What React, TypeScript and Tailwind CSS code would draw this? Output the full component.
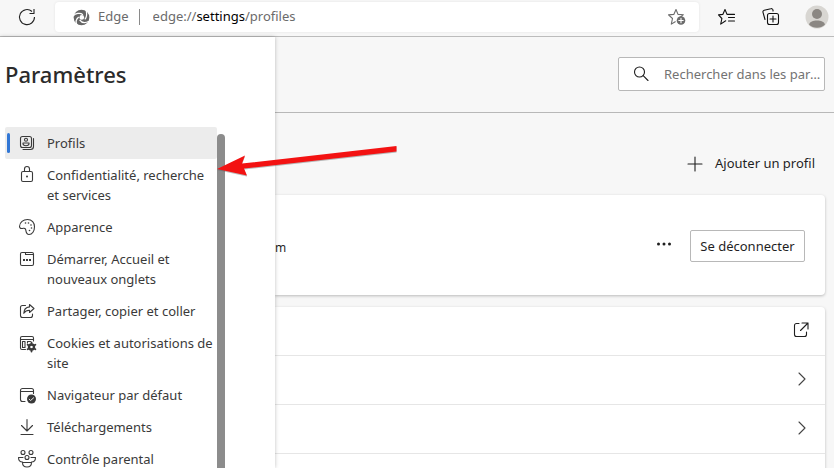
import type { ReactNode } from 'react';

type IconProps = { children: ReactNode; className?: string };

function Icon({ children, className = 'size-5' }: IconProps) {
  return (
    <svg
      viewBox="0 0 20 20"
      className={`shrink-0 ${className}`}
      fill="none"
      stroke="currentColor"
      strokeWidth="1.1"
      strokeLinecap="round"
      strokeLinejoin="round"
      aria-hidden="true"
    >
      {children}
    </svg>
  );
}

const star = 'M9 2.5l2 4.9 5.4.3-4.1 3.5M9 2.5l-2.2 4.9-5.3.5 4 3.6-1.2 5.6 3.9-2.4';

const navItems: { label: string; icon: ReactNode }[] = [
  {
    label: 'Profils',
    icon: (
      <>
        <rect x="3.5" y="3.5" width="11" height="11" rx="2" />
        <circle cx="9" cy="6.8" r="1.5" />
        <path d="M6 10h6v.8c0 1.2-1.3 1.9-3 1.9s-3-.7-3-1.9zM16.5 5.5v8a3 3 0 0 1-3 3H6" />
      </>
    ),
  },
  {
    label: 'Confidentialité, recherche et services',
    icon: (
      <>
        <rect x="4.5" y="6.5" width="11" height="10" rx="1.5" />
        <path d="M7.5 6.500V4a2.500 2.500 0 0 1 5 0v2.500" />
        <circle cx="10" cy="11.500" r="1" fill="currentColor" stroke="none" />
      </>
    ),
  },
  {
    label: 'Apparence',
    icon: (
      <>
        <path d="M2.5 9.5C2.5 5 6.5 2.500 10.500 2.500c4.500 0 7 3.500 7 7.300 0 4.200-2.200 7.700-5.500 7.700-2.800 0-2.800-2.200-3.200-4.300-.3-1.700-1.300-2.200-2.600-1.900-1.800.5-3.700.3-3.700-1.800z" />
        <g fill="currentColor" stroke="none">
          <circle cx="8.5" cy="6" r=".8" />
          <circle cx="11.5" cy="6" r=".8" />
          <circle cx="14" cy="8" r=".8" />
          <circle cx="14.5" cy="11" r=".8" />
          <circle cx="12.5" cy="13.5" r=".8" />
        </g>
      </>
    ),
  },
  {
    label: 'Démarrer, Accueil et nouveaux onglets',
    icon: (
      <>
        <rect x="3.5" y="3.5" width="13" height="13" rx="1.5" />
        <path d="M8.5 3.5v2h8" />
        <path d="M6 11h2M9 11h2M12 11h2" strokeWidth="2" strokeLinecap="butt" />
      </>
    ),
  },
  {
    label: 'Partager, copier et coller',
    icon: (
      <>
        <path d="M8.5 4.5h-3a2 2 0 0 0-2 2v8a2 2 0 0 0 2 2h8a2 2 0 0 0 2-2v-1.5" />
        <path d="M12.5 3.5l4.5 4-4.500 4V9.300c-3 0-4.500 1-5.700 3 .1-3.500 2-6 5.700-6.400z" />
      </>
    ),
  },
  {
    label: 'Cookies et autorisations de site',
    icon: (
      <>
        <path d="M8.5 16.5H5A1.5 1.5 0 0 1 3.5 15V5A1.5 1.5 0 0 1 5 3.5h10A1.5 1.5 0 0 1 16.5 5v3M3.5 6.5h13M8 14.5H5.5v-6H8zM10.5 10V8.5h3" />
        <circle cx="14.5" cy="14" r="2.5" strokeWidth="2.4" />
        <path d="M14.500 9.500v2M14.500 16.500v2M10.600 11.700l1.700 1M16.700 15.300l1.700 1M18.400 11.700l-1.700 1M12.300 15.300l-1.700 1" strokeWidth="1.800" />
      </>
    ),
  },
  {
    label: 'Navigateur par défaut',
    icon: (
      <>
        <path d="M8 16.5H5.5a2 2 0 0 1-2-2v-9a2 2 0 0 1 2-2h9a2 2 0 0 1 2 2v3M3.5 6.5h13" />
        <circle cx="14.5" cy="14" r="4.5" fill="currentColor" stroke="none" />
        <path d="M12.2 14.3l1.4 1.2 3-2.7" stroke="#fff" strokeWidth=".9" />
      </>
    ),
  },
  {
    label: 'Téléchargements',
    icon: <path d="M10 2.5v11M4.5 8.5l5.5 5.5 5.5-5.5M4 17.5h12" />,
  },
  {
    label: 'Contrôle parental',
    icon: (
      <>
        <circle cx="6" cy="3.5" r="2" />
        <circle cx="14" cy="3.5" r="2" />
        <circle cx="10" cy="8.500" r="2" />
        <path d="M5.5 13C3 13 1.500 11.300 1.500 8.500H6M14.500 13c2.500 0 4-1.700 4-4.500H14M5.500 13.500h9c0 2.800-1.800 4.500-4.500 4.500s-4.500-1.700-4.500-4.500z" />
      </>
    ),
  },
];

function BrowserBar() {
  return (
    <header className="flex h-[37px] shrink-0 items-start border-b border-[#bcbcbc] bg-[#f7f7f7] pr-[5px]">
      <button type="button" aria-label="Actualiser" className="ml-[17px] mt-[7px] text-[#222]">
        <Icon>
          <path d="M17.5 10A7.5 7.5 0 1 1 15 4.500M17 2v4.500h-4.500" strokeLinecap="butt" />
        </Icon>
      </button>
      <div className="ml-[18px] mt-[2px] flex h-[30px] min-w-0 flex-1 items-center rounded-[4px] bg-white pl-[18px] pr-3 text-[13px] text-[#6b6b6b] shadow-[0_0_3px_rgba(0,0,0,0.08)]">
        <svg viewBox="0 0 18 18" className="size-[17px] shrink-0" aria-hidden="true">
          <circle cx="9" cy="9" r="8.300" fill="#666" />
          <g fill="none" stroke="#fff" strokeWidth="1.300">
            <path d="M0 7.500C2.500 4.500 7.500 3.500 10.500 6" />
            <path d="M14 1.500c.5 3 1.500 6.500-1.500 9.500" />
            <path d="M17 13c-4 2-8 1.500-10-1.500" />
            <path d="M4.500 17.500c-2-3.500-1-7 1.500-9" />
          </g>
          <circle cx="9.300" cy="8.900" r="2.500" fill="#fff" />
        </svg>
        <span className="ml-2">Edge</span>
        <span className="ml-[10px] h-4 w-px bg-[#8a8a8a]" />
        <span className="ml-[13px] flex-1 truncate">
          edge://<span className="text-black">settings</span>/profiles
        </span>
        <button type="button" aria-label="Ajouter aux favoris">
          <Icon>
            <path d={star} />
            <circle cx="14" cy="13.5" r="4.3" fill="currentColor" stroke="none" />
            <path d="M14 11.3v4.4M11.8 13.5h4.4" stroke="#fff" />
          </Icon>
        </button>
      </div>
      <div className="ml-[18px] mt-[5px] flex items-center text-[#111]">
        <button type="button" aria-label="Favoris">
          <Icon>
            <path d="M8 2.500l2 4.900h7.500M8 2.500L5.800 7.400l-4.300.5 3.400 3.600-1.200 5.600 5-3.300M11.500 10.500h6M11.500 14h6" />
          </Icon>
        </button>
        <button type="button" aria-label="Collections" className="ml-6">
          <Icon>
            <path d="M4 12.500L2 5.300A1.700 1.700 0 0 1 3.200 3.200L9.800 1.700A1.700 1.700 0 0 1 12 3v1" />
            <rect x="6.500" y="6.500" width="11" height="11" rx="2" />
            <path d="M12 9v6M9 12h6" />
          </Icon>
        </button>
        <button type="button" aria-label="Profil" className="ml-6">
          <svg viewBox="0 0 24 24" className="size-6" aria-hidden="true">
            <circle cx="12" cy="12" r="11.500" fill="#d8d6d2" />
            <circle cx="12" cy="9" r="5" fill="#8b8783" />
            <path d="M4 19.500c1-3 4-4 8-4s7 1 8 4a11.500 11.500 0 0 1-16 0z" fill="#8b8783" />
          </svg>
        </button>
      </div>
    </header>
  );
}

function Sidebar() {
  return (
    <aside className="relative z-10 flex w-[275px] shrink-0 flex-col bg-white shadow-[0_0_4px_rgba(0,0,0,0.25)]">
      <h1 className="px-[5px] pb-9 pt-[22px] text-[22px] font-medium leading-[30px] text-[#2b2b2b]">Paramètres</h1>
      <div className="mt-[2px] flex min-h-0 flex-1 overflow-hidden pl-[5px]">
        <nav className="w-[212px] shrink-0" aria-label="Paramètres">
          {navItems.map((item, i) => (
            <a
              key={item.label}
              href="#"
              aria-current={i === 0 ? 'page' : undefined}
              className={`flex rounded-[2px] py-[6px] text-[13px] leading-5 text-[#3a3a3a] ${i === 0 ? 'bg-[#ececec]' : ''}`}
            >
              <span className={`ml-[2px] h-5 w-[3px] shrink-0 rounded-full ${i === 0 ? 'bg-[#3277d5]' : ''}`} />
              <Icon className="ml-[7px] size-5">{item.icon}</Icon>
              <span className="ml-[10px] flex-1">{item.label}</span>
            </a>
          ))}
        </nav>
        <div className="mt-[7px] w-2 rounded-t-full bg-[#8c8c8c]" />
      </div>
    </aside>
  );
}

function Profiles() {
  return (
    <main className="min-w-0 flex-1 bg-[#f7f7f7] text-[13px] text-[#1f1f1f]">
      <div className="flex h-[76px] justify-end border-b border-[#b8b8b8] pr-[9px] pt-5">
        <label className="flex h-[34px] w-[207px] items-center rounded-[2px] border border-[#b8b8b8] bg-white pl-3 pr-[2px]">
          <Icon>
            <circle cx="8.500" cy="8" r="5" />
            <path d="M12.200 11.700l4.800 4.800" />
          </Icon>
          <input
            type="text"
            aria-label="Rechercher dans les paramètres"
            placeholder="Rechercher dans les paramètres"
            className="ml-[13px] w-full min-w-0 text-ellipsis bg-transparent pt-[2px] outline-none placeholder:text-[#737373]"
          />
        </label>
      </div>
      <div className="flex h-[82px] items-center justify-end pr-[19px] pt-5">
        <button type="button" className="flex items-center gap-[10px]">
          <Icon>
            <path d="M10 3v14M3 10h14" />
          </Icon>
          Ajouter un profil
        </button>
      </div>
      <div className="flex flex-col gap-3 pr-[9px]">
        <section className="flex h-[100px] items-center rounded-r-[4px] bg-white pr-5 shadow-[0_1px_3px_rgba(0,0,0,0.25)]">
          <span className="flex-1 pt-[6px] text-[12px]">m</span>
          <button type="button" aria-label="Plus d’options" className="mr-4">
            <Icon>
              <g fill="currentColor" stroke="none">
                <circle cx="4.500" cy="9" r="1.500" />
                <circle cx="10" cy="9" r="1.500" />
                <circle cx="15.500" cy="9" r="1.500" />
              </g>
            </Icon>
          </button>
          <button
            type="button"
            className="mt-[2px] h-8 w-[115px] whitespace-nowrap rounded-[2px] border border-[#b8b8b8] pt-px"
          >
            Se déconnecter
          </button>
        </section>
        <section className="rounded-tr-[4px] bg-white shadow-[0_1px_3px_rgba(0,0,0,0.25)]">
          {['Gérer le compte', 'Synchroniser', 'Informations personnelles', 'Importer'].map((name, i) => (
            <button
              key={name}
              type="button"
              aria-label={name}
              className="flex h-[49px] w-full items-center justify-end border-b border-[#e6e6e6] pb-[2px] pr-[14px]"
            >
              {i === 0 ? (
                <Icon>
                  <path d="M8 3.500H5.500a2 2 0 0 0-2 2v9a2 2 0 0 0 2 2h8a2 2 0 0 0 2-2V12M11 3h6v6M17 3l-7.500 7.500" />
                </Icon>
              ) : (
                <Icon className="size-5 text-[#444]">
                  <path d="M8 4l6 6-6 6" />
                </Icon>
              )}
            </button>
          ))}
        </section>
      </div>
    </main>
  );
}

export default function App() {
  return (
    <div className="relative flex h-screen flex-col overflow-hidden bg-[#f7f7f7] font-['Segoe_UI','Noto_Sans','Open_Sans',sans-serif]">
      <BrowserBar />
      <div className="flex min-h-0 flex-1">
        <Sidebar />
        <Profiles />
      </div>
      <svg
        viewBox="0 0 182 36"
        className="pointer-events-none absolute left-[216px] top-[142px] z-20 h-9 w-[182px]"
        aria-hidden="true"
      >
        <path d="M1 27L29 13.500l-3 8L180.500 4v5.500L28 26.500l3 7z" fill="#555" opacity=".4" transform="translate(0 1)" />
        <path d="M1 27L29 13.500l-3 8L180.500 4v5.500L28 26.500l3 7z" fill="#f31212" />
      </svg>
    </div>
  );
}
